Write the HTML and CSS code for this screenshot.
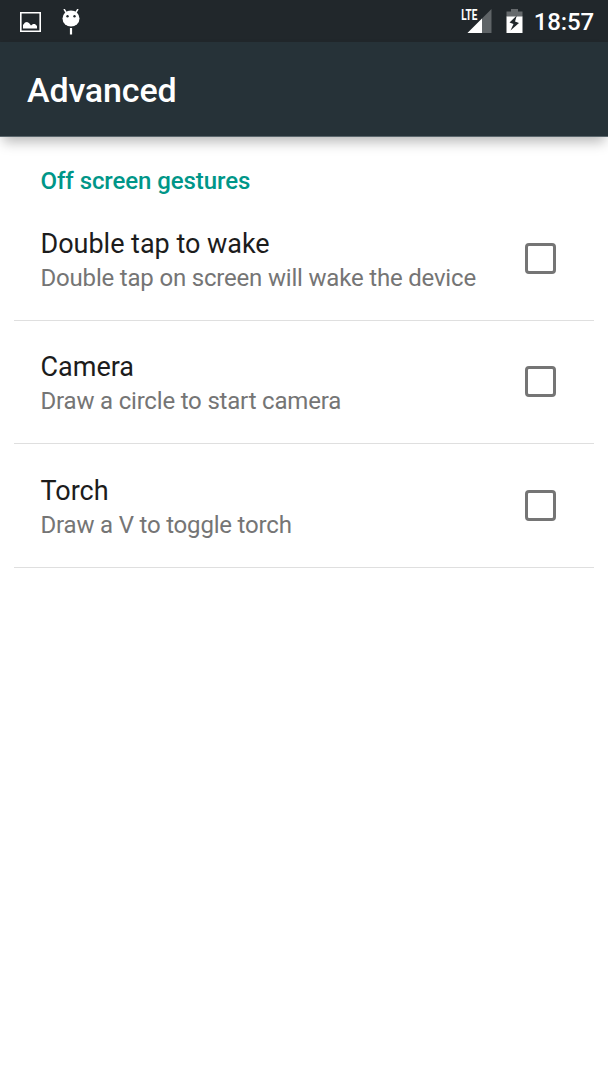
FILE: index.html
```html
<!DOCTYPE html>
<html lang="en">
<head>
<meta charset="utf-8">
<title>Advanced</title>
<link rel="stylesheet" href="styles.css">
</head>
<body>
<header class="status">
  <svg class="picture" width="21" height="20" viewBox="0 0 21 20"><path fill="none" stroke="#fff" stroke-width="1.6" d="M.8.8h19.400v18.400H.8z"/><path fill="#fff" d="M3 16.500v-3.500l2-2.500 2-.5 2 1 2 2.500 2-1.500h2l2 2v2.500z"/></svg>
  <svg class="android" width="18" height="26" viewBox="0 0 18 26"><ellipse cx="9" cy="9.500" rx="8.500" ry="8" fill="#fff"/><path fill="none" stroke="#fff" stroke-width="1.500" d="M2 0l2.500 4M16 0l-2.500 4"/><path stroke="#fff" stroke-width="2.200" d="M9 19v6.500"/><circle cx="5.500" cy="7.300" r="1.200" fill="#21272b"/><circle cx="12.500" cy="7.300" r="1.200" fill="#21272b"/></svg>
  <span class="spacer"></span>
  <svg class="signal" width="31" height="26" viewBox="0 0 31 26"><path fill="#5f6467" d="M30.500 0v24H6.500z"/><path fill="#21272b" d="M0 0h17v12H0z"/><path fill="#fff" d="M21 9.500V24H6.500z"/><text class="network" x="0.300" y="11" textLength="16" lengthAdjust="spacingAndGlyphs">LTE</text></svg>
  <svg class="battery" width="17" height="26" viewBox="0 0 17 26"><path fill="#666a6d" d="M5 0h7v2.500h4.500V8H.5V2.500H5z"/><path fill="#fff" d="M.5 7.500h16V24H.5z"/><path fill="#21272b" d="M10.800 6.500L3.500 13.500l4 1.500-3 6.500 8.500-7.500-4-1.500z"/></svg>
  <time class="clock">18:57</time>
</header>
<h1 class="bar">Advanced</h1>
<main class="list">
  <h2 class="category">Off screen gestures</h2>
  <label class="row"><span class="copy"><span class="title">Double tap to wake</span><span class="summary">Double tap on screen will wake the device</span></span><input class="check" type="checkbox"></label>
  <label class="row"><span class="copy"><span class="title">Camera</span><span class="summary">Draw a circle to start camera</span></span><input class="check" type="checkbox"></label>
  <label class="row"><span class="copy"><span class="title">Torch</span><span class="summary">Draw a V to toggle torch</span></span><input class="check" type="checkbox"></label>
</main>
</body>
</html>
```
FILE: styles.css
```css
* { box-sizing: border-box; }
body { margin: 0; min-height: 1080px; background: #fff; font-family: Roboto, sans-serif; }
.status { display: flex; height: 42px; padding: 9px 14px 0 20px; background: #21272b; }
.picture { margin-top: 3px; }
.android { margin-left: 21px; }
.spacer { flex: 1; }
.signal { overflow: visible; }
.network { fill: #fff; font-size: 14.5px; font-weight: 700; }
.battery { margin-left: 14px; }
.clock { margin-left: 11px; color: #fff; font-size: 24px; font-weight: 500; line-height: 27px; letter-spacing: -0.15px; }
.bar { height: 95px; margin: 0; padding-left: 27px; border-bottom: 1px solid #5a666c; background: #263238; color: #fff; font-size: 34px; font-weight: 500; line-height: 97px; letter-spacing: -0.15px; box-shadow: 0 8px 12px -3px rgba(0,0,0,.28); }
.list { padding: 25px 14px 0; }
.category { margin: 0; padding-left: 26.5px; height: 34.8px; color: #009688; font-size: 24px; font-weight: 500; line-height: 38px; letter-spacing: -0.08px; }
.row { display: flex; align-items: center; height: 123.8px; padding: 0 38px 0 26.5px; border-bottom: 1px solid #dfdfdf; }
.copy { display: flex; flex: 1; flex-direction: column; padding-top: 4px; white-space: nowrap; }
.title { color: #1c1c1c; font-size: 27px; line-height: 36px; letter-spacing: -0.02px; }
.summary { color: #757575; font-size: 24px; line-height: 33px; letter-spacing: -0.19px; }
.check { appearance: none; width: 31px; height: 31px; margin: 0; border: 3px solid #757575; border-radius: 4px; }
```
